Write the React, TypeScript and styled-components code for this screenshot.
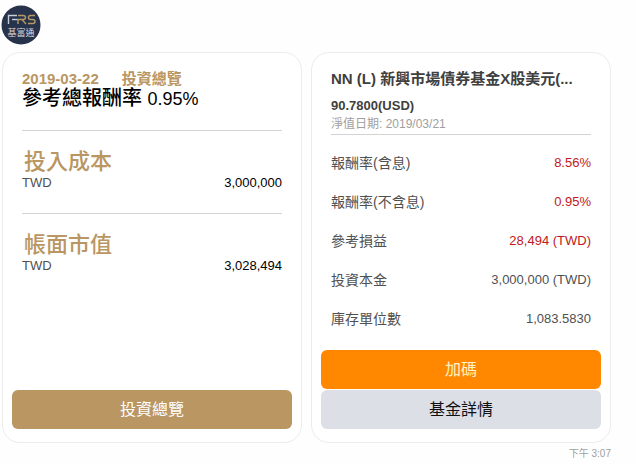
import React from "react";
import styled, { createGlobalStyle } from "styled-components";

const GlobalStyle = createGlobalStyle`
  * { box-sizing: border-box; }
  body {
    margin: 0;
    background: #fefefe;
    color: #505050;
    font-family: "Liberation Sans", "Noto Sans CJK TC", sans-serif;
    font-size: 13px;
    line-height: 18px;
  }
  h2, h3, p, dl, dt, dd { margin: 0; }
`;

const Message = styled.main`
  display: flex;
  flex-direction: column;
  padding: 5px 25px 0 2px;
`;

const Avatar = styled.svg`
  display: block;
  width: 40px;
  height: 40px;
  margin: 0 0 7px -1px;
`;

const Carousel = styled.div`
  display: grid;
  grid-template-columns: 1fr 1fr;
  gap: 9px;
`;

const Card = styled.section`
  display: flex;
  flex-direction: column;
  min-width: 0;
  min-height: 391px;
  padding: 18px 9px 13px;
  border: 1px solid #ececec;
  border-radius: 18px;
  background: #fff;
`;

const CardBody = styled.div`
  flex: 1;
  padding: 0 10px;
`;

const Actions = styled.div`
  display: grid;
  gap: 1px;
`;

const Overline = styled.p`
  display: flex;
  gap: 23px;
  color: #b99662;
  font-size: 15px;
  font-weight: 700;
  line-height: 16px;
`;

const Headline = styled.h2`
  color: #000;
  font-size: 20px;
  font-weight: 500;
  line-height: 22px;
`;

const HeadlineValue = styled.span`
  font-size: 18px;
`;

const Amount = styled.section`
  margin-top: 20px;
  padding-top: 20px;
  border-top: 1px solid #d4d4d4;
`;

const AmountTitle = styled.h3`
  padding-left: 2px;
  color: #b99662;
  font-size: 22px;
  font-weight: 500;
  line-height: 22px;
`;

const AmountRow = styled.div`
  display: flex;
  justify-content: space-between;
  line-height: 20px;
`;

const AmountValue = styled.span`
  color: #000;
`;

const FundName = styled.h2`
  overflow: hidden;
  color: #404040;
  font-size: 15px;
  font-weight: 700;
  line-height: 16px;
  white-space: nowrap;
`;

const FundPrice = styled.p`
  margin-top: 10px;
  color: #404040;
  font-weight: 700;
`;

const FundDate = styled.p`
  color: #a0a0a0;
  font-size: 12px;
  line-height: 19px;
`;

const Details = styled.dl`
  padding-top: 8px;
  border-top: 1px solid #d4d4d4;
`;

const DetailRow = styled.div`
  display: flex;
  align-items: center;
  justify-content: space-between;
  height: 39px;
`;

const DetailLabel = styled.dt`
  font-size: 14px;
`;

const DetailValue = styled.dd<{ $gain?: boolean }>`
  color: ${({ $gain }) => ($gain ? "#c01820" : "#505050")};
`;

const tones = {
  gold: { background: "#b99662", color: "#fff" },
  orange: { background: "#ff8800", color: "#fff3c8" },
  grey: { background: "#dcdfe6", color: "#111" },
};

const ActionButton = styled.button<{ $tone: keyof typeof tones }>`
  width: 100%;
  height: 39px;
  padding: 0;
  border: 0;
  border-radius: 6px;
  background: ${({ $tone }) => tones[$tone].background};
  color: ${({ $tone }) => tones[$tone].color};
  font: inherit;
  font-size: 16px;
  cursor: pointer;
`;

const Timestamp = styled.time`
  align-self: flex-end;
  margin-top: 2px;
  color: #a0a0a0;
  font-size: 10px;
`;

const amounts = [
  { title: "投入成本", value: "3,000,000" },
  { title: "帳面市值", value: "3,028,494" },
];

const details = [
  { label: "報酬率(含息)", value: "8.56%", gain: true },
  { label: "報酬率(不含息)", value: "0.95%", gain: true },
  { label: "參考損益", value: "28,494 (TWD)", gain: true },
  { label: "投資本金", value: "3,000,000 (TWD)" },
  { label: "庫存單位數", value: "1,083.5830" },
];

export default function App() {
  return (
    <>
      <GlobalStyle />
      <Message>
        <Avatar viewBox="0 0 40 40" role="img" aria-label="FRS 基富通">
          <circle cx="20" cy="20" r="19.5" fill="#27324b" />
          <g fill="none" strokeWidth="1.4">
            <path d="M7.500 19V10.500H16" stroke="#c8ced8" />
            <path d="M11 14.500H16" stroke="#c8ced8" />
            <path d="M16 14.500H22Q24.500 14.500 24.500 12.500T22 10.500H17M17 14.500V19M21 14.500L25 19" stroke="#b59a68" />
            <path d="M34 10.500H29.500Q27.500 10.500 27.500 12.500T29.500 14.500H31.800Q34 14.500 34 16.500T31.800 18.500H27" stroke="#b59a68" />
          </g>
          <text x="20" y="31" textAnchor="middle" fill="#d5d8df" fontSize="9" fontFamily="Noto Sans CJK TC, sans-serif">
            基富通
          </text>
        </Avatar>
        <Carousel>
          <Card>
            <CardBody>
              <Overline>
                <span>2019-03-22</span>
                <span>投資總覽</span>
              </Overline>
              <Headline>
                參考總報酬率 <HeadlineValue>0.95%</HeadlineValue>
              </Headline>
              {amounts.map((item) => (
                <Amount key={item.title}>
                  <AmountTitle>{item.title}</AmountTitle>
                  <AmountRow>
                    <span>TWD</span>
                    <AmountValue>{item.value}</AmountValue>
                  </AmountRow>
                </Amount>
              ))}
            </CardBody>
            <Actions>
              <ActionButton type="button" $tone="gold">投資總覽</ActionButton>
            </Actions>
          </Card>
          <Card>
            <CardBody>
              <FundName>NN (L) 新興市場債券基金X股美元(...</FundName>
              <FundPrice>90.7800(USD)</FundPrice>
              <FundDate>淨值日期: 2019/03/21</FundDate>
              <Details>
                {details.map((row) => (
                  <DetailRow key={row.label}>
                    <DetailLabel>{row.label}</DetailLabel>
                    <DetailValue $gain={row.gain}>{row.value}</DetailValue>
                  </DetailRow>
                ))}
              </Details>
            </CardBody>
            <Actions>
              <ActionButton type="button" $tone="orange">加碼</ActionButton>
              <ActionButton type="button" $tone="grey">基金詳情</ActionButton>
            </Actions>
          </Card>
        </Carousel>
        <Timestamp dateTime="15:07">下午 3:07</Timestamp>
      </Message>
    </>
  );
}
